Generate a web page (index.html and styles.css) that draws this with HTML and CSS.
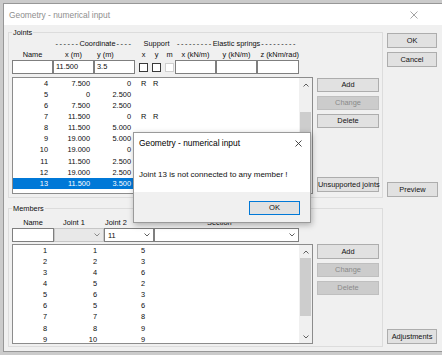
FILE: index.html
```html
<!DOCTYPE html>
<html lang="en">
<head>
<meta charset="utf-8">
<title>Geometry - numerical input</title>
<link rel="stylesheet" href="styles.css">
</head>
<body>
<div class="window">
  <div class="titlebar">
    <span class="title">Geometry - numerical input</span>
    <svg class="xicon main-x" width="8" height="8" viewBox="0 0 8 8"><path d="M0.5 0.5L7.5 7.5M7.5 0.5L0.5 7.5"/></svg>
  </div>
  <div class="client">
    <div class="groups">
      <div class="group joints">
        <div class="glabel">Joints</div>
        <div class="jgrid">
          <div class="hdr hdr1">
            <span class="h-coord"><span class="dash">------</span>Coordinate<span class="dash dash-after">----</span></span>
            <span class="h-support">Support</span>
            <span class="h-springs"><span class="dash">---------</span>Elastic springs<span class="dash dash-after">---------</span></span>
          </div>
          <div class="hdr hdr2">
            <span class="hc">Name</span>
            <span class="hc">x (m)</span>
            <span class="hy">y (m)</span>
            <span class="hsup"><span>x</span><span>y</span><span>m</span></span>
            <span class="hc">x (kN/m)</span>
            <span class="hc">y (kN/m)</span>
            <span class="hz">z (kNm/rad)</span>
          </div>
          <div class="inrow">
            <div class="tb"></div>
            <div class="tb">11.500</div>
            <div class="tb">3.5</div>
            <div class="cbs"><span class="cb"></span><span class="cb"></span><span class="cb dis"></span></div>
            <div class="tb"></div>
            <div class="tb"></div>
            <div class="tb"></div>
          </div>
          <div class="list jlist">
            <div class="rows jrows">
              <div class="row"><span class="c1">4</span><span class="c2">7.500</span><span class="c3">0</span><span class="c4">R</span><span class="c5">R</span></div>
              <div class="row"><span class="c1">5</span><span class="c2">0</span><span class="c3">2.500</span></div>
              <div class="row"><span class="c1">6</span><span class="c2">7.500</span><span class="c3">2.500</span></div>
              <div class="row"><span class="c1">7</span><span class="c2">11.500</span><span class="c3">0</span><span class="c4">R</span><span class="c5">R</span></div>
              <div class="row"><span class="c1">8</span><span class="c2">11.500</span><span class="c3">5.000</span></div>
              <div class="row"><span class="c1">9</span><span class="c2">19.000</span><span class="c3">5.000</span></div>
              <div class="row"><span class="c1">10</span><span class="c2">19.000</span><span class="c3">0</span></div>
              <div class="row"><span class="c1">11</span><span class="c2">11.500</span><span class="c3">2.500</span></div>
              <div class="row"><span class="c1">12</span><span class="c2">19.000</span><span class="c3">2.500</span></div>
              <div class="row sel"><span class="c1">13</span><span class="c2">11.500</span><span class="c3">3.500</span></div>
            </div>
            <div class="sb">
              <div class="arr"><svg width="6" height="4" viewBox="0 0 6 4"><path d="M0.5 3.5L3 1L5.5 3.5"/></svg></div>
              <div class="track"><div class="thumb jthumb"></div></div>
              <div class="arr"><svg width="6" height="4" viewBox="0 0 6 4"><path d="M0.5 0.5L3 3L5.5 0.5"/></svg></div>
            </div>
          </div>
          <div class="btncol jbtns">
            <button class="btn">Add</button>
            <button class="btn" disabled>Change</button>
            <button class="btn">Delete</button>
            <button class="btn unsup">Unsupported joints</button>
          </div>
        </div>
      </div>

      <div class="group members">
        <div class="glabel">Members</div>
        <div class="mgrid">
          <div class="hdr mhdr">
            <span class="hc">Name</span>
            <span class="hj1">Joint 1</span>
            <span class="hj2">Joint 2</span>
            <span class="hsec">Section</span>
          </div>
          <div class="minrow">
            <div class="tb"></div>
            <div class="cbx dis"><svg class="chev" width="6" height="4" viewBox="0 0 6 4"><path d="M0.5 0.5L3 3L5.5 0.5"/></svg></div>
            <div class="cbx"><span>11</span><svg class="chev" width="6" height="4" viewBox="0 0 6 4"><path d="M0.5 0.5L3 3L5.5 0.5"/></svg></div>
            <div class="cbx"><svg class="chev" width="6" height="4" viewBox="0 0 6 4"><path d="M0.5 0.5L3 3L5.5 0.5"/></svg></div>
          </div>
          <div class="list mlist">
            <div class="rows mrows">
              <div class="row"><span class="c1">1</span><span class="c2">1</span><span class="c3">5</span></div>
              <div class="row"><span class="c1">2</span><span class="c2">2</span><span class="c3">3</span></div>
              <div class="row"><span class="c1">3</span><span class="c2">4</span><span class="c3">6</span></div>
              <div class="row"><span class="c1">4</span><span class="c2">5</span><span class="c3">2</span></div>
              <div class="row"><span class="c1">5</span><span class="c2">6</span><span class="c3">3</span></div>
              <div class="row"><span class="c1">6</span><span class="c2">5</span><span class="c3">6</span></div>
              <div class="row"><span class="c1">7</span><span class="c2">7</span><span class="c3">8</span></div>
              <div class="row"><span class="c1">8</span><span class="c2">8</span><span class="c3">9</span></div>
              <div class="row"><span class="c1">9</span><span class="c2">10</span><span class="c3">9</span></div>
            </div>
            <div class="sb">
              <div class="arr"><svg width="6" height="4" viewBox="0 0 6 4"><path d="M0.5 3.5L3 1L5.5 3.5"/></svg></div>
              <div class="track"><div class="thumb mthumb"></div></div>
              <div class="arr"><svg width="6" height="4" viewBox="0 0 6 4"><path d="M0.5 0.5L3 3L5.5 0.5"/></svg></div>
            </div>
          </div>
          <div class="btncol mbtns">
            <button class="btn">Add</button>
            <button class="btn" disabled>Change</button>
            <button class="btn" disabled>Delete</button>
          </div>
        </div>
      </div>
    </div>

    <div class="side">
      <button class="btn ok">OK</button>
      <button class="btn cancel">Cancel</button>
      <button class="btn preview">Preview</button>
      <button class="btn adjust">Adjustments</button>
    </div>
  </div>
</div>

<div class="msgbox">
  <div class="mtitle">
    <span class="mtext">Geometry - numerical input</span>
    <svg class="xicon msg-x" width="7" height="7" viewBox="0 0 7 7"><path d="M0.5 0.5L6.5 6.5M6.5 0.5L0.5 6.5"/></svg>
  </div>
  <div class="mbody">Joint 13 is not connected to any member !</div>
  <div class="mfoot"><button class="btn okbtn">OK</button></div>
</div>
</body>
</html>
```

FILE: styles.css
```css
* { box-sizing: border-box; }
html, body { margin: 0; padding: 0; }
body {
  width: 442px;
  height: 355px;
  overflow: hidden;
  position: relative;
  background: #cbcbcb;
  font-family: "Liberation Sans", Arial, sans-serif;
  font-size: 7.4px;
  color: #0d0d0d;
}

.window {
  margin: 3px 0 0 3px;
  width: 446px;
  height: 349px;
  background: #f0f0f0;
  border: 1px solid #979797;
  display: flex;
  flex-direction: column;
}

.titlebar {
  flex: none;
  height: 21px;
  background: #fff;
  display: flex;
  align-items: center;
  padding-left: 5px;
}
.title { flex: 1; font-size: 8.4px; color: #8e8e8e; }
.xicon path { fill: none; stroke-width: 0.9; }
.main-x { margin-right: 30px; }
.main-x path { stroke: #9a9a9a; }

.client {
  flex: 1;
  display: flex;
  padding: 7px 0 0 4px;
}
.groups { width: 375px; display: flex; flex-direction: column; }

.group {
  border: 1px solid #dcdcdc;
  padding: 0 3px 3px 3px;
}
.glabel {
  width: max-content;
  height: 9px;
  line-height: 9px;
  margin-top: -5px;
  padding: 0 1px;
  background: #f0f0f0;
}
.members { margin-top: 10px; padding-bottom: 2px; }

/* Joints grid */
.jgrid {
  display: grid;
  grid-template-columns: 301px 62px;
  column-gap: 4px;
  grid-template-areas: "h1 ." "h2 ." "in ." "list btns";
  margin-top: 1px;
}
.hdr1 { grid-area: h1; }
.hdr2 { grid-area: h2; }
.inrow { grid-area: in; }
.jlist { grid-area: list; margin-top: 3px; height: 117px; }
.jbtns { grid-area: btns; margin-top: 3px; padding-top: 1px; padding-bottom: 2px; }

.hdr1, .hdr2, .inrow {
  display: grid;
  grid-template-columns: 41px 41px 41px 40px 41px 41px 42px;
}
.hdr1, .hdr2 { height: 11px; line-height: 11px; white-space: nowrap; }
.h-coord { grid-column: 2 / 4; justify-self: center; }
.h-support { grid-column: 4; justify-self: center; padding-left: 3px; }
.h-springs { grid-column: 5 / 8; justify-self: center; }
.dash { letter-spacing: 1.5px; }
.dash-after { margin-left: 1px; }

.hc { justify-self: center; }
.hy { justify-self: start; padding-left: 3px; }
.hz { justify-self: end; }
.hsup { display: flex; gap: 4px; padding-left: 4px; }
.hsup span { width: 9px; text-align: center; }

.inrow { height: 14px; }
.tb {
  height: 14px;
  border: 1px solid #7f7f7f;
  background: #fff;
  padding-left: 2px;
  line-height: 12px;
}
.cbs { display: flex; gap: 4px; padding: 3px 0 0 4px; }
.cb {
  width: 9px;
  height: 9px;
  border: 1px solid #3a3a3a;
  background: #fff;
}
.cb.dis { border-color: #cfcfcf; }

/* lists */
.list {
  display: flex;
  border: 1px solid #8c8c8c;
  background: #fff;
}
.rows { flex: 1; overflow: hidden; }
.row {
  display: flex;
  height: 11.1px;
  padding-top: 1.85px;
  line-height: 7.4px;
  white-space: nowrap;
}
.row.sel { background: #0078d7; color: #fff; }
.jrows .c1 { width: 35px; text-align: right; }
.jrows .c2 { width: 42px; text-align: right; }
.jrows .c3 { width: 41px; text-align: right; }
.jrows .c4 { width: 12px; margin-left: 10px; }
.jrows .c5 { width: 12px; }
.mrows .c1 { width: 34px; text-align: right; }
.mrows .c2 { width: 50px; text-align: right; }
.mrows .c3 { width: 48px; text-align: right; }

.sb {
  width: 13px;
  background: #f0f0f0;
  display: flex;
  flex-direction: column;
}
.arr {
  flex: none;
  height: 13px;
  display: flex;
  align-items: center;
  justify-content: center;
}
.arr path, .chev path { fill: none; stroke: #606060; stroke-width: 1; }
.track { flex: 1; display: flex; flex-direction: column; }
.thumb { background: #cdcdcd; margin: 0 1px; }
.jthumb { margin-top: auto; height: 68px; }
.mthumb { height: 58px; }

/* buttons */
.btn {
  display: block;
  margin: 0;
  padding: 0;
  height: 14px;
  border: 1px solid #adadad;
  background: #e1e1e1;
  font-family: inherit;
  font-size: 7.4px;
  line-height: 12px;
  color: #111;
  text-align: center;
  white-space: nowrap;
}
.btn:disabled { background: #cccccc; border-color: #bfbfbf; color: #8a8a8a; }

.btncol { display: flex; flex-direction: column; gap: 4px; }
.unsup { margin-top: auto; height: 15px; }

/* members grid */
.mgrid {
  display: grid;
  grid-template-columns: 301px 62px;
  column-gap: 4px;
  grid-template-areas: "h ." "in ." "list btns";
  margin-top: 5px;
}
.mhdr { grid-area: h; }
.minrow { grid-area: in; }
.mlist { grid-area: list; margin-top: 2px; height: 100px; }
.mbtns { grid-area: btns; margin-top: 2px; }
.mbtns .btn:first-child { height: 15px; }

.mhdr, .minrow {
  display: grid;
  grid-template-columns: 42px 50px 50px 145px;
}
.mhdr { height: 10px; line-height: 10px; white-space: nowrap; }
.hj1 { padding-left: 9px; }
.hj2 { padding-left: 1px; }
.hsec { padding-left: 53px; }
.minrow { height: 14px; }
.cbx {
  height: 14px;
  border: 1px solid #7f7f7f;
  background: #fff;
  display: flex;
  align-items: center;
  padding: 0 3px 0 3px;
}
.cbx .chev { margin-left: auto; }
.cbx.dis { background: #e8e8e8; border-color: #c6c6c6; }
.cbx.dis .chev path { stroke: #8a8a8a; }

/* right-hand buttons */
.side {
  width: 50px;
  margin-left: 4px;
  display: flex;
  flex-direction: column;
}
.side .btn { height: 15px; line-height: 13px; }
.ok { margin-top: 1px; }
.cancel { margin-top: 4px; }
.preview { margin-top: 115px; width: 51px; }
.adjust { margin-top: 132px; }

/* message box */
.msgbox {
  position: absolute;
  left: 133px;
  top: 132px;
  width: 178px;
  height: 91px;
  background: #fff;
  border: 1px solid #9a9a9a;
  box-shadow: 1px 2px 6px rgba(0, 0, 0, 0.28);
  display: flex;
  flex-direction: column;
}
.mtitle {
  flex: none;
  height: 20px;
  display: flex;
  align-items: center;
  padding-left: 5px;
}
.mtext { flex: 1; font-size: 8.4px; color: #000; }
.msg-x { margin-right: 8px; }
.msg-x path { stroke: #333; }
.mbody {
  flex: none;
  height: 39px;
  padding: 17px 0 0 5px;
  line-height: 10px;
  font-size: 8px;
  color: #111;
}
.mfoot {
  flex: 1;
  background: #f0f0f0;
  display: flex;
  justify-content: flex-end;
  padding: 9px 10px 0 0;
}
.okbtn {
  width: 51px;
  height: 14px;
  border-color: #0078d7;
  font-size: 7.6px;
}
```
